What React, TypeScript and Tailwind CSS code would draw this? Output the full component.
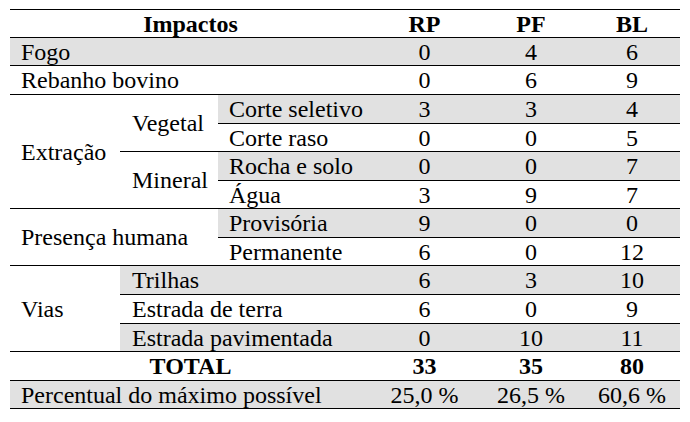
import React from "react";

const gray = "bg-[#e1e1e1]";
const line = "border-b border-black";

const Num = ({ v, cls = "" }: { v: string; cls?: string }) => (
  <div className={`flex items-center justify-center ${cls}`}>{v}</div>
);

const Label = ({ children, cls = "" }: { children: React.ReactNode; cls?: string }) => (
  <div className={`flex items-center pl-[11px] whitespace-nowrap ${cls}`}>{children}</div>
);

const nums = (vals: string[], cls: string) => vals.map((v, i) => <Num key={i} v={v} cls={cls} />);

export default function App() {
  return (
    <div className="w-[690px] h-[422px] bg-white pt-[9px] pl-[10px]">
      <div className="grid w-[670px] grid-cols-[110px_98px_153px_107px_106px_96px] grid-rows-[28px_28px_29px_29px_28px_29px_28px_29px_28px_29px_29px_28px_29px_28px] border-t border-black font-['Liberation_Serif'] text-[24px] leading-[24px] text-black antialiased">
        {/* header */}
        <div className={`col-span-3 flex items-center justify-center font-bold ${line}`}>Impactos</div>
        {nums(["RP", "PF", "BL"], `font-bold ${line}`)}

        <Label cls={`col-span-3 ${gray} ${line}`}>Fogo</Label>
        {nums(["0", "4", "6"], `${gray} ${line}`)}

        <Label cls={`col-span-3 ${line}`}>Rebanho bovino</Label>
        {nums(["0", "6", "9"], line)}

        {/* Extração */}
        <Label cls={`row-span-4 ${line}`}>Extração</Label>
        <Label cls={`row-span-2 pl-[12px] ${line}`}>Vegetal</Label>
        <Label cls={`${gray} ${line}`}>Corte seletivo</Label>
        {nums(["3", "3", "4"], `${gray} ${line}`)}
        <Label cls={line}>Corte raso</Label>
        {nums(["0", "0", "5"], line)}
        <Label cls={`row-span-2 pl-[12px] ${line}`}>Mineral</Label>
        <Label cls={`${gray} ${line}`}>Rocha e solo</Label>
        {nums(["0", "0", "7"], `${gray} ${line}`)}
        <Label cls={line}>Água</Label>
        {nums(["3", "9", "7"], line)}

        {/* Presença humana */}
        <Label cls={`col-span-2 row-span-2 ${line}`}>Presença humana</Label>
        <Label cls={`${gray} ${line}`}>Provisória</Label>
        {nums(["9", "0", "0"], `${gray} ${line}`)}
        <Label cls={line}>Permanente</Label>
        {nums(["6", "0", "12"], line)}

        {/* Vias */}
        <Label cls={`row-span-3 ${line}`}>Vias</Label>
        <Label cls={`col-span-2 pl-[12px] ${gray} ${line}`}>Trilhas</Label>
        {nums(["6", "3", "10"], `${gray} ${line}`)}
        <Label cls={`col-span-2 pl-[12px] ${line}`}>Estrada de terra</Label>
        {nums(["6", "0", "9"], line)}
        <Label cls={`col-span-2 pl-[12px] ${gray} ${line}`}>Estrada pavimentada</Label>
        {nums(["0", "10", "11"], `${gray} ${line}`)}

        {/* total */}
        <div className={`col-span-3 flex items-center justify-center font-bold ${line}`}>TOTAL</div>
        {nums(["33", "35", "80"], `font-bold ${line}`)}

        <Label cls={`col-span-3 ${gray} ${line}`}>Percentual do máximo possível</Label>
        {nums(["25,0 %", "26,5 %", "60,6 %"], `${gray} ${line}`)}
      </div>
    </div>
  );
}
